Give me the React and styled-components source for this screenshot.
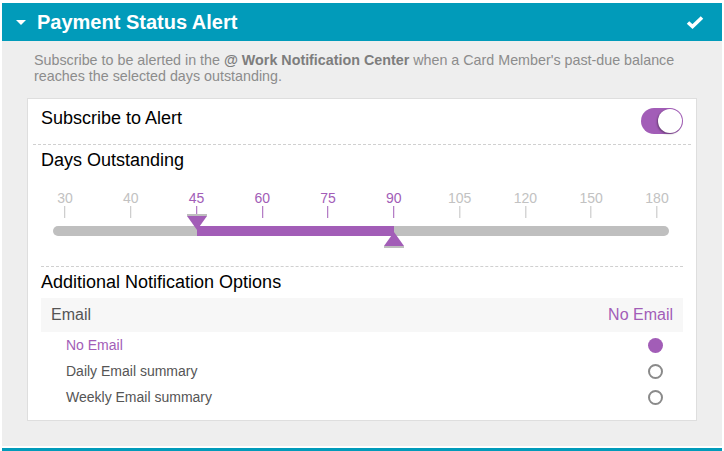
import React from 'react';
import styled, { createGlobalStyle } from 'styled-components';

const TEAL = '#019bba';
const PURPLE = '#a25db7';

const GlobalStyle = createGlobalStyle`
  body {
    margin: 0;
    background: #fff;
    font-family: "Liberation Sans", Arial, sans-serif;
  }
`;

const ticks = [30, 40, 45, 60, 75, 90, 105, 120, 150, 180];
const range = { low: 2, high: 5 };

const options = ['No Email', 'Daily Email summary', 'Weekly Email summary'];

// slider geometry (px): scale is inset 12px inside the 616px track
const TRACK_W = 616;
const INSET = 12;
const tickX = i => INSET + (i * (TRACK_W - INSET * 2)) / (ticks.length - 1);

const Caret = () => (
  <CaretIcon viewBox="0 0 10 5">
    <polygon points="0,0 10,0 5,5" />
  </CaretIcon>
);

const Check = () => (
  <CheckIcon viewBox="0 0 18 14">
    <polyline points="2,7.5 6.5,11.5 16,2.5" />
  </CheckIcon>
);

const DaysSlider = () => (
  <Slider>
    <Scale>
      {ticks.map((t, i) => (
        <Tick key={t} style={{ left: tickX(i) - INSET }} active={i >= range.low && i <= range.high}>
          <TickLabel>{t}</TickLabel>
          <TickMark />
        </Tick>
      ))}
    </Scale>
    <Track>
      <Fill style={{ left: tickX(range.low), width: tickX(range.high) - tickX(range.low) }} />
    </Track>
    <Thumb style={{ left: tickX(range.low) - 10 }} viewBox="0 0 20 16" top={24}>
      <rect x="0" y="0" width="20" height="2" fill="#bdbdbd" />
      <polygon points="0,2 20,2 10,16" fill={PURPLE} />
    </Thumb>
    <Thumb style={{ left: tickX(range.high) - 10 }} viewBox="0 0 20 16" top={42}>
      <polygon points="10,0 20,14 0,14" fill={PURPLE} />
      <rect x="0" y="14" width="20" height="2" fill="#bdbdbd" />
    </Thumb>
  </Slider>
);

export default function App() {
  return (
    <>
      <GlobalStyle />
      <Page>
        <Panel>
          <PanelHeader>
            <Caret />
            <Title>Payment Status Alert</Title>
            <Check />
          </PanelHeader>
          <Description>
            Subscribe to be alerted in the <strong>@ Work Notification Center</strong> when a Card
            Member's past-due balance reaches the selected days outstanding.
          </Description>
          <Card>
            <SubscribeRow>
              <Heading>Subscribe to Alert</Heading>
              <Toggle on>
                <Knob />
              </Toggle>
            </SubscribeRow>
            <Section dashed>
              <Heading>Days Outstanding</Heading>
              <DaysSlider />
            </Section>
            <Section>
              <Heading>Additional Notification Options</Heading>
              <ChannelRow>
                <span>Email</span>
                <ChannelValue>No Email</ChannelValue>
              </ChannelRow>
              <OptionList>
                {options.map((o, i) => (
                  <Option key={o} selected={i === 0}>
                    <span>{o}</span>
                    <Radio selected={i === 0} />
                  </Option>
                ))}
              </OptionList>
            </Section>
          </Card>
        </Panel>
        <Panel>
          <PanelHeader />
        </Panel>
      </Page>
    </>
  );
}

const Page = styled.div`
  display: flex;
  flex-direction: column;
  gap: 2px;
  padding: 3px 2px 0;
`;

const Panel = styled.div`
  background: #eeeeee;
`;

const PanelHeader = styled.div`
  display: flex;
  align-items: center;
  height: 38px;
  padding: 0 18px 0 14px;
  background: ${TEAL};
  color: #fff;
`;

const CaretIcon = styled.svg`
  width: 10px;
  height: 5px;
  fill: #fff;
`;

const Title = styled.h1`
  flex: 1;
  margin: 0 0 0 11px;
  font-size: 20px;
  font-weight: bold;
`;

const CheckIcon = styled.svg`
  width: 18px;
  height: 14px;
  fill: none;
  stroke: #fff;
  stroke-width: 3.6px;
`;

const Description = styled.p`
  margin: 0;
  padding: 11px 32px 0;
  font-size: 14.3px;
  line-height: 16px;
  color: #8c8c8c;

  strong {
    color: #7d7d7d;
  }
`;

const Card = styled.div`
  margin: 14px 25px 25px 25px;
  background: #fff;
  border: 1px solid #dedede;
`;

const Heading = styled.div`
  font-size: 18px;
  line-height: 21px;
  color: #000;
`;

const SubscribeRow = styled.div`
  display: flex;
  justify-content: space-between;
  align-items: flex-start;
  margin: 0 5px;
  padding: 9px 8px 10px;
  border-bottom: 1px dashed #d0d0d0;
`;

const Toggle = styled.div`
  display: flex;
  justify-content: ${p => (p.on ? 'flex-end' : 'flex-start')};
  align-items: center;
  width: 42px;
  height: 26px;
  padding: 0 1px;
  box-sizing: border-box;
  border-radius: 13px;
  background: ${p => (p.on ? PURPLE : '#ccc')};
`;

const Knob = styled.div`
  width: 24px;
  height: 24px;
  border-radius: 50%;
  background: #fff;
  box-shadow: -1px 1px 2px rgba(0, 0, 0, 0.35);
`;

const Section = styled.div`
  margin: 0 13px;
  padding-top: 5px;
  border-bottom: ${p => (p.dashed ? '1px dashed #d0d0d0' : 'none')};
`;

const Slider = styled.div`
  position: relative;
  width: ${TRACK_W}px;
  height: 58px;
  margin: 19px 14px 18px 12px;
`;

const Scale = styled.div`
  position: absolute;
  top: 0;
  left: ${INSET}px;
  right: ${INSET}px;
`;

const Tick = styled.div`
  position: absolute;
  top: 0;
  display: flex;
  flex-direction: column;
  align-items: center;
  transform: translateX(-50%);
  color: ${p => (p.active ? PURPLE : '#c2c2c2')};
`;

const TickLabel = styled.span`
  font-size: 14px;
  line-height: 16px;
`;

const TickMark = styled.span`
  width: 1px;
  height: 12px;
  background: currentColor;
`;

const Track = styled.div`
  position: absolute;
  top: 36px;
  left: 0;
  right: 0;
  height: 10px;
  border-radius: 5px;
  background: #bfbfbf;
`;

const Fill = styled.div`
  position: absolute;
  top: 0;
  height: 100%;
  background: ${PURPLE};
`;

const Thumb = styled.svg`
  position: absolute;
  top: ${p => p.top}px;
  width: 20px;
  height: 16px;
`;

const ChannelRow = styled.div`
  display: flex;
  justify-content: space-between;
  align-items: center;
  height: 34px;
  margin-top: 5px;
  padding: 0 10px;
  background: #f7f7f7;
  font-size: 16px;
  color: #555;
`;

const ChannelValue = styled.span`
  color: ${PURPLE};
`;

const OptionList = styled.div`
  padding: 0 20px 10px 25px;
`;

const Option = styled.div`
  display: flex;
  justify-content: space-between;
  align-items: center;
  height: 26px;
  font-size: 14px;
  color: ${p => (p.selected ? PURPLE : '#555')};
`;

const Radio = styled.span`
  width: 15px;
  height: 15px;
  box-sizing: border-box;
  border-radius: 50%;
  background: ${p => (p.selected ? PURPLE : '#fff')};
  border: ${p => (p.selected ? 'none' : '2px solid #8a8a8a')};
`;
